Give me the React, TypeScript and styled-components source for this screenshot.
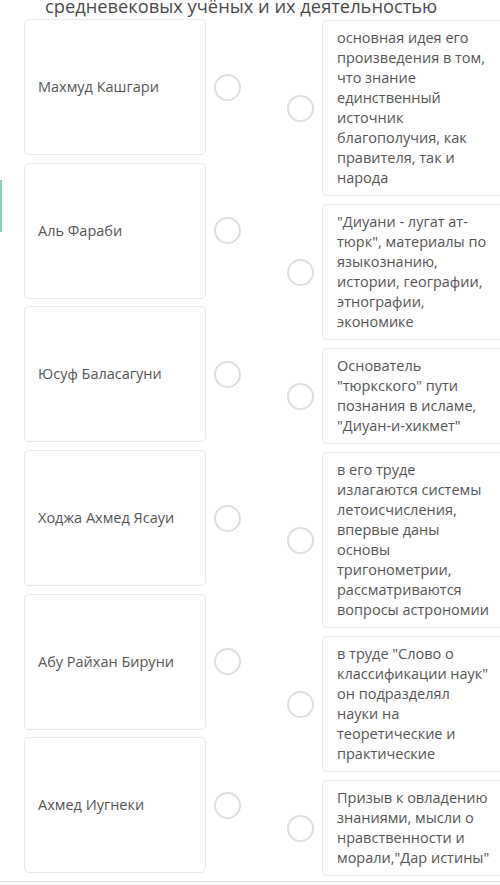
import styled, { createGlobalStyle } from "styled-components";

// left column: names, right column: descriptions
const names = [
  "Махмуд Кашгари",
  "Аль Фараби",
  "Юсуф Баласагуни",
  "Ходжа Ахмед Ясауи",
  "Абу Райхан Бируни",
  "Ахмед Иугнеки",
];

const answers = [
  "основная идея его произведения в том, что знание единственный источник благополучия, как правителя, так и народа",
  "\"Диуани - лугат ат-тюрк\", материалы по языкознанию, истории, географии, этнографии, экономике",
  "Основатель \"тюркского\" пути познания в исламе, \"Диуан-и-хикмет\"",
  "в его труде излагаются системы летоисчисления, впервые даны основы тригонометрии, рассматриваются вопросы астрономии",
  "в труде \"Слово о классификации наук\" он подразделял науки на теоретические и практические",
  "Призыв к овладению знаниями, мысли о нравственности и морали,\"Дар истины\"",
];

export default function App() {
  return (
    <Page>
      <GlobalStyle />
      <SideTab />
      <Title>средневековых учёных и их деятельностью</Title>
      <Board>
        <LeftColumn>
          {names.map((name) => (
            <Row key={name}>
              <NameCard>{name}</NameCard>
              <Radio />
            </Row>
          ))}
        </LeftColumn>
        <RightColumn>
          {answers.map((text) => (
            <Row key={text}>
              <Radio />
              <AnswerCard>{text}</AnswerCard>
            </Row>
          ))}
        </RightColumn>
      </Board>
      <BottomLine />
    </Page>
  );
}

const GlobalStyle = createGlobalStyle`
  html, body {
    margin: 0;
    padding: 0;
    background: #ffffff;
    overflow: hidden;
  }
  body {
    font-family: "Open Sans", "Noto Sans", sans-serif;
    color: #555555;
  }
`;

const Page = styled.div`
  position: relative;
  width: 500px;
  height: 885px;
  overflow: hidden;
  display: flex;
  flex-direction: column;
`;

const SideTab = styled.div`
  position: absolute;
  left: 0;
  top: 180px;
  width: 2px;
  height: 52px;
  background: #86d6ad;
`;

const Title = styled.div`
  margin: -7px 0 0 45px;
  font-size: 18.3px;
  line-height: 26px;
  color: #4a4a4a;
  white-space: nowrap;
`;

const Board = styled.div`
  display: flex;
  align-items: flex-start;
`;

const LeftColumn = styled.div`
  display: flex;
  flex-direction: column;
  gap: 7.7px;
  padding-left: 24px;
`;

const RightColumn = styled.div`
  display: flex;
  flex-direction: column;
  gap: 8px;
  margin-left: 46px;
  padding-top: 1px;
`;

const Row = styled.div`
  display: flex;
  align-items: center;
  gap: 8px;
`;

const Card = styled.div`
  box-sizing: border-box;
  background: #ffffff;
  border: 1px solid #e9e9e9;
  border-radius: 5px;
  font-size: 14.5px;
  line-height: 20px;
  color: #555555;
`;

const NameCard = styled(Card)`
  width: 182px;
  height: 136px;
  display: flex;
  align-items: center;
  padding: 0 13px;
`;

const AnswerCard = styled(Card)`
  width: 186px;
  flex-shrink: 0;
  padding: 7px 14px;
`;

const Radio = styled.div`
  box-sizing: border-box;
  width: 27px;
  height: 27px;
  flex-shrink: 0;
  border: 2px solid #dfdfdf;
  border-radius: 50%;
  background: #ffffff;
`;

const BottomLine = styled.div`
  margin-top: 5px;
  height: 1px;
  background: #dcdcdc;
`;
